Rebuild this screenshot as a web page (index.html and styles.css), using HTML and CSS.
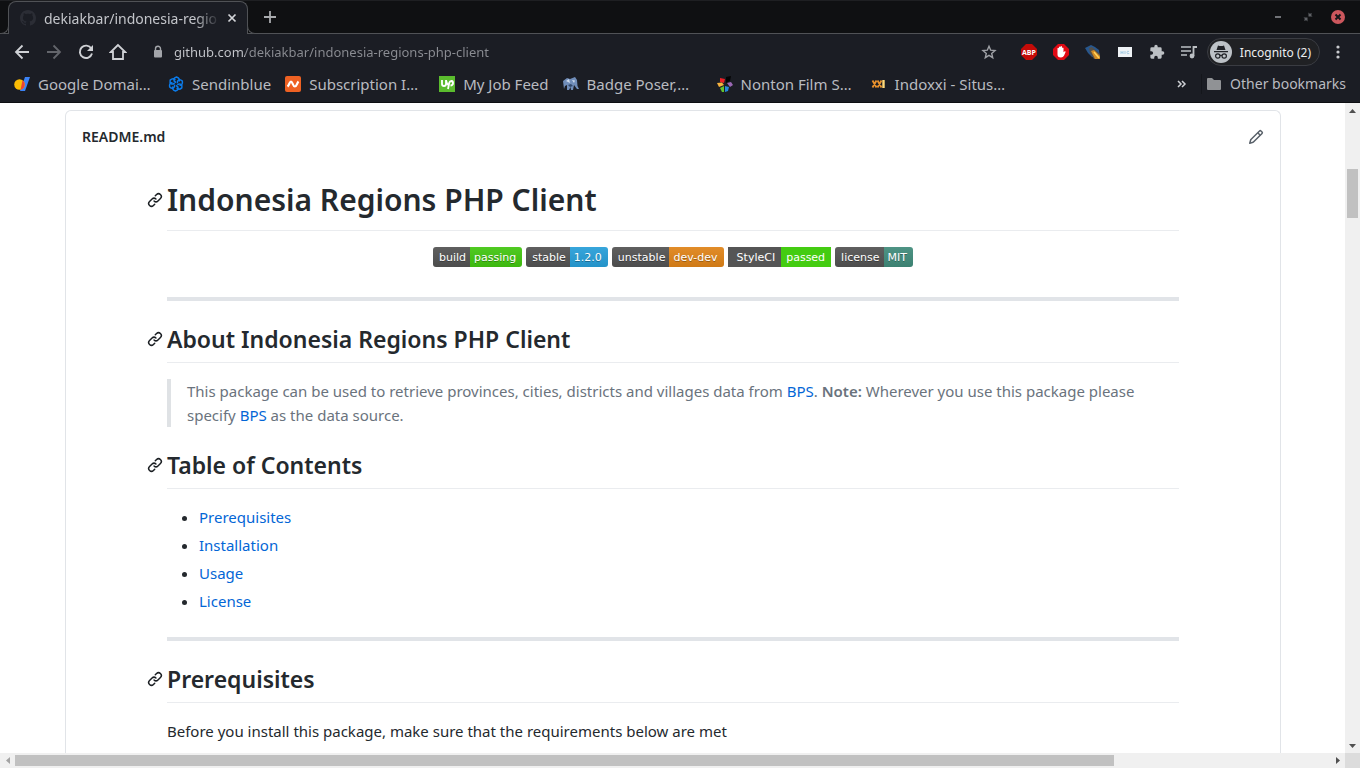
FILE: index.html
```html
<!DOCTYPE html>
<html lang="en">
<head>
<meta charset="utf-8">
<title>dekiakbar/indonesia-regions-php-client</title>
<link rel="stylesheet" href="styles.css">
</head>
<body>
<svg class="defs" aria-hidden="true">
  <symbol id="link" viewBox="0 0 16 16"><path fill-rule="evenodd" d="M7.775 3.275a.75.75 0 001.06 1.06l1.25-1.25a2 2 0 112.83 2.83l-2.5 2.5a2 2 0 01-2.83 0 .75.75 0 00-1.06 1.06 3.5 3.5 0 004.95 0l2.5-2.5a3.5 3.5 0 00-4.95-4.95l-1.25 1.25zm-4.69 9.64a2 2 0 010-2.83l2.5-2.5a2 2 0 012.83 0 .75.75 0 001.06-1.06 3.5 3.5 0 00-4.95 0l-2.5 2.5a3.5 3.5 0 004.95 4.95l1.25-1.25a.75.75 0 00-1.06-1.06l-1.25 1.25a2 2 0 01-2.83 0z"/></symbol>
</svg>
<header class="chrome">
  <div class="tabstrip">
    <div class="tab">
      <svg class="tab-icon" viewBox="0 0 16 16" aria-hidden="true"><path fill="#2b2d35" d="M8 0C3.58 0 0 3.58 0 8c0 3.54 2.29 6.53 5.47 7.59.4.07.55-.17.55-.38 0-.19-.01-.82-.01-1.49-2.01.37-2.53-.49-2.69-.94-.09-.23-.48-.94-.82-1.13-.28-.15-.68-.52-.01-.53.63-.01 1.08.58 1.23.82.72 1.21 1.87.87 2.33.66.07-.52.28-.87.51-1.07-1.78-.2-3.64-.89-3.64-3.95 0-.87.31-1.59.82-2.15-.08-.2-.36-1.02.08-2.12 0 0 .67-.21 2.2.82.64-.18 1.32-.27 2-.27s1.36.09 2 .27c1.53-1.04 2.2-.82 2.2-.82.44 1.1.16 1.92.08 2.12.51.56.82 1.27.82 2.15 0 3.07-1.87 3.75-3.65 3.95.29.25.54.73.54 1.48 0 1.07-.01 1.93-.01 2.2 0 .21.15.46.55.38A8.01 8.01 0 0016 8c0-4.42-3.58-8-8-8z"/></svg>
      <span class="tab-title">dekiakbar/indonesia-regio</span>
      <button class="tab-close" aria-label="Close tab"><svg width="10" height="10" viewBox="0 0 10 10"><path d="M1.500 1.500l7 7m0-7l-7 7" stroke="#d4d6da" stroke-width="1.700"/></svg></button>
    </div>
    <button class="new-tab" aria-label="New tab"><svg width="14" height="14" viewBox="0 0 14 14"><path d="M7 1v12M1 7h12" stroke="#a9abae" stroke-width="1.800"/></svg></button>
    <div class="window-buttons">
      <button aria-label="Minimize"><svg width="16" height="16" viewBox="0 0 16 16"><path d="M5 8h6" stroke="#707277" stroke-width="2"/></svg></button>
      <button aria-label="Restore"><svg width="16" height="16" viewBox="0 0 16 16"><path fill="#606267" d="M8.500 3.500v4h4zM7.500 12.500v-4h-4z"/><path d="M9.500 6.500l2-2M6.500 9.500l-2 2" stroke="#606267" stroke-width="1.300"/></svg></button>
      <button aria-label="Close window"><svg width="16" height="16" viewBox="0 0 16 16"><circle cx="8" cy="8" r="7" fill="#cc575d"/><path d="M5.500 5.500l5 5m0-5l-5 5" stroke="#15171a" stroke-width="2"/></svg></button>
    </div>
  </div>
  <div class="toolbar">
    <button class="tool" aria-label="Back"><svg width="16" height="16" viewBox="0 0 16 16"><path d="M15 8H2m6.500-6.500L2 8l6.500 6.500" fill="none" stroke="#cfd1d5" stroke-width="1.800"/></svg></button>
    <button class="tool" aria-label="Forward"><svg width="16" height="16" viewBox="0 0 16 16"><path d="M1 8h13M7.500 1.500L14 8l-6.500 6.500" fill="none" stroke="#63656b" stroke-width="1.800"/></svg></button>
    <button class="tool" aria-label="Reload"><svg width="16" height="16" viewBox="0 0 16 16"><path d="M13.300 4.500A6.200 6.200 0 1 0 14 9.500" fill="none" stroke="#cfd1d5" stroke-width="1.900"/><path d="M15 1v6H9z" fill="#cfd1d5"/></svg></button>
    <button class="tool" aria-label="Home"><svg width="18" height="18" viewBox="0 0 18 18"><path d="M9 2L1.800 9H4v7h10V9h2.200z" fill="none" stroke="#cfd1d5" stroke-width="1.800"/></svg></button>
    <div class="address">
      <svg width="16" height="16" viewBox="0 0 16 16" aria-hidden="true"><path d="M5.500 7V4.800a2.500 2.500 0 015 0V7" fill="none" stroke="#a3a5aa" stroke-width="1.400"/><rect x="4" y="6" width="8" height="7.500" rx="1" fill="#a3a5aa"/></svg>
      <input class="url" type="text" aria-label="Address" value="github.com/dekiakbar/indonesia-regions-php-client">
      <button class="tool" aria-label="Bookmark this page"><svg width="16" height="16" viewBox="0 0 16 16"><path d="M8 2.200l1.700 4 4.300.4-3.300 2.800 1 4.300L8 11.400l-3.700 2.300 1-4.300L2 6.600l4.300-.4z" fill="none" stroke="#9fa1a6" stroke-width="1.400"/></svg></button>
    </div>
    <button class="tool tool--first" aria-label="Adblock Plus"><svg width="16" height="16" viewBox="0 0 16 16"><path d="M5 0h6l5 5v6l-5 5H5l-5-5V5z" fill="#c40b08"/><text class="abp" x="8" y="11">ABP</text></svg></button>
    <button class="tool" aria-label="AdBlock"><svg width="16" height="16" viewBox="0 0 16 16"><path d="M5 0h6l5 5v6l-5 5H5l-5-5V5z" fill="#e10a14"/><path d="M4.500 8V4.300q.8-.9 1.500 0V3q.8-.9 1.500 0v-.500q.8-.9 1.500 0V4q.8-.9 1.500 0v4.300l1.200-1q1-.3.900.700L11 11.700Q10 13.500 8 13.500c-2.500 0-3.500-1.300-3.500-3z" fill="#fff"/></svg></button>
    <button class="tool" aria-label="Download helper"><svg width="16" height="16" viewBox="0 0 16 16"><path d="M0 4l6-3 4 2 4 3 1 8-8-1-4-4z" fill="#28578d"/><path d="M4 4l3-1 8 7v5h-6L5 9z" fill="#55504a"/><path d="M6 7l3-1 6 6v3h-5z" fill="#d28a25"/><path d="M9 8l5 6" stroke="#ffd35c" stroke-width="1.500"/></svg></button>
    <button class="tool" aria-label="Extension"><svg width="16" height="16" viewBox="0 0 16 16"><path d="M1 3h14v10H1z" fill="#eef2f5"/><path d="M4 7v3m0-1.500h2m0-1.500v3m2-3v3m4-2.500q-2-1-2 1t2 1V9" fill="none" stroke="#a5cbe2"/></svg></button>
    <button class="tool" aria-label="Extensions"><svg width="16" height="16" viewBox="0 0 24 24"><path fill="#bcc0c4" d="M20.500 11H19V7a2 2 0 00-2-2h-4V3.500a2.500 2.500 0 00-5 0V5H4a2 2 0 00-2 2v3.800h1.500a2.700 2.700 0 010 5.400H2V20a2 2 0 002 2h3.800v-1.500a2.700 2.700 0 015.400 0V22H17a2 2 0 002-2v-4h1.500a2.500 2.500 0 000-5z"/></svg></button>
    <button class="tool" aria-label="Media controls"><svg width="16" height="16" viewBox="0 0 16 16"><path d="M0 3h10M0 7h10M0 11h6" stroke="#bcc0c4" stroke-width="1.600"/><path d="M12.500 12V3H16" fill="none" stroke="#bcc0c4" stroke-width="1.800"/><circle cx="11" cy="12" r="2.400" fill="#bcc0c4"/></svg></button>
    <button class="incognito"><svg width="22" height="22" viewBox="0 0 22 22" aria-hidden="true"><circle cx="11" cy="11" r="11" fill="#bdc2c7"/><path d="M6.500 9L8 4.500q3 1 6 0L15.500 9zM4 10h14v1.300H4z" fill="#202227"/><g fill="none" stroke="#202227" stroke-width="1.200"><circle cx="7.800" cy="15" r="2.200"/><circle cx="14.200" cy="15" r="2.200"/><path d="M10 14.600q1-.6 2 0"/></g></svg>Incognito (2)</button>
    <button class="menu" aria-label="Menu"><svg width="4" height="16" viewBox="0 0 4 16"><g fill="#c8cace"><circle cx="2" cy="3" r="1.600"/><circle cx="2" cy="8" r="1.600"/><circle cx="2" cy="13" r="1.600"/></g></svg></button>
  </div>
  <nav class="bookmarks" aria-label="Bookmarks">
    <a class="bookmark bookmark--clipped" href="#"><svg width="16" height="16" viewBox="0 0 16 16"><path d="M11 1h5l-5 14H6z" fill="#3b83f6"/><circle cx="5.500" cy="8.500" r="5.300" fill="#fbbc04"/><path d="M8.500 4.200a5.300 5.300 0 01-.6 9L6.500 14z" fill="#ea4335"/></svg>Google Domai…</a>
    <a class="bookmark" href="#"><svg width="16" height="16" viewBox="0 0 16 16"><g fill="none" stroke="#0b7bea" stroke-width="1.500"><path id="petal" d="M8 6.500C5 5 5 2 8.500 1c3 1 3.500 3 2.300 4.500"/><use href="#petal" transform="rotate(60 8 8)"/><use href="#petal" transform="rotate(120 8 8)"/><use href="#petal" transform="rotate(180 8 8)"/><use href="#petal" transform="rotate(240 8 8)"/><use href="#petal" transform="rotate(300 8 8)"/></g></svg>Sendinblue</a>
    <a class="bookmark bookmark--clipped" href="#"><svg width="16" height="16" viewBox="0 0 16 16"><rect width="16" height="16" rx="2" fill="#ee6123"/><path d="M2.500 10.500C4.500 9 4.500 5.500 6 5.500S8 10.500 9.800 10.500 12 7 13.500 5.500" fill="none" stroke="#fff" stroke-width="2.200"/></svg>Subscription I…</a>
    <a class="bookmark" href="#"><svg width="16" height="16" viewBox="0 0 16 16"><path d="M0 0h16v16H0z" fill="#5bbc2e"/><path d="M3 4v4q0 2 2 2t2-2V4m0 0q.5 4 3 5.500M9 13l1.200-6q.5-2 2.300-2 1.700.3 1.500 2.300T11.500 9.500" fill="none" stroke="#fff" stroke-width="1.800"/></svg>My Job Feed</a>
    <a class="bookmark bookmark--clipped" href="#"><svg width="16" height="16" viewBox="0 0 16 16"><path d="M0 5l4-3 3 1 5-2 2 3 .5 6 1.500 3h-2l-3-4-1 5H8l-.5-3L6 14H4V9l-2 1-1 3z" fill="#708db9"/><path d="M3 5l3-2 1 4zm6-1l3 .5L11 7z" fill="#cfdcee"/><path d="M5 9l3-1 2 2-3 1z" fill="#31486c"/></svg>Badge Poser,…</a>
    <a class="bookmark bookmark--clipped" href="#"><svg width="16" height="16" viewBox="0 0 16 16"><path d="M9 1l5-1-1 5-4 2z" fill="#050506"/><path d="M3 2l5 1-1 4-4-1z" fill="#ea1f26"/><path d="M0 7l5-.5L7 9l-5 2z" fill="#f6b23e"/><path d="M3 12l4-2v6H5z" fill="#63c22c"/><path d="M8 10l4 1-1 4-3 1z" fill="#2589db"/><path d="M10 7l4-1 2 3-3 2z" fill="#9b68b5"/></svg>Nonton Film S…</a>
    <a class="bookmark bookmark--clipped" href="#"><svg width="16" height="16" viewBox="0 0 16 16"><path d="M1.500 4.500l4 7m0-7l-4 7M6.500 4.500l4 7m0-7l-4 7" stroke="#e8912d" stroke-width="1.800"/><path d="M12.500 4v8" stroke="#ffd978" stroke-width="2.400"/></svg>Indoxxi - Situs…</a>
    <button class="overflow" aria-label="More bookmarks"><svg width="10" height="8" viewBox="0 0 10 8"><path d="M1 1l3 3-3 3m4-6l3 3-3 3" fill="none" stroke="#cfd1d5" stroke-width="1.500"/></svg></button>
    <a class="bookmark bookmark--other" href="#"><svg width="16" height="16" viewBox="0 0 16 16"><path d="M1 3q0-1 1-1h4l2 2h6q1 0 1 1v8q0 1-1 1H2q-1 0-1-1z" fill="#909295"/></svg>Other bookmarks</a>
  </nav>
</header>
<div class="window">
  <main class="page">
    <section class="card">
      <div class="card-head"><a href="#">README.md</a><button aria-label="Edit this file"><svg width="16" height="16" viewBox="0 0 16 16"><path fill="#586069" fill-rule="evenodd" d="M11.013 1.427a1.75 1.75 0 012.474 0l1.086 1.086a1.75 1.75 0 010 2.474l-8.61 8.61c-.21.21-.47.364-.756.445l-3.251.93a.75.75 0 01-.927-.928l.929-3.25a1.75 1.75 0 01.445-.758l8.61-8.61zm1.414 1.06a.25.25 0 00-.354 0L10.811 3.75l1.439 1.44 1.263-1.263a.25.25 0 000-.354l-1.086-1.086zM11.189 6.25L9.75 4.81l-6.286 6.287a.25.25 0 00-.064.108l-.558 1.953 1.953-.558a.249.249 0 00.108-.064l6.286-6.286z"/></svg></button></div>
      <article class="readme">
        <h1><a class="anchor" href="#" aria-label="Permalink"><svg width="16" height="16"><use href="#link"/></svg></a>Indonesia Regions PHP Client</h1>
        <p class="badges">
          <a class="badge" href="#"><span class="key">build</span><span class="value green">passing</span></a>
          <a class="badge" href="#"><span class="key">stable</span><span class="value blue">1.2.0</span></a>
          <a class="badge" href="#"><span class="key">unstable</span><span class="value orange">dev-dev</span></a>
          <a class="badge badge--flat" href="#"><span class="key">StyleCI</span><span class="value green">passed</span></a>
          <a class="badge" href="#"><span class="key">license</span><span class="value teal">MIT</span></a>
        </p>
        <hr>
        <h2><a class="anchor" href="#" aria-label="Permalink"><svg width="16" height="16"><use href="#link"/></svg></a>About Indonesia Regions PHP Client</h2>
        <blockquote>This package can be used to retrieve provinces, cities, districts and villages data from <a href="#">BPS</a>. <strong>Note:</strong> Wherever you use this package please specify <a href="#">BPS</a> as the data source.</blockquote>
        <h2><a class="anchor" href="#" aria-label="Permalink"><svg width="16" height="16"><use href="#link"/></svg></a>Table of Contents</h2>
        <ul>
          <li><a href="#">Prerequisites</a></li>
          <li><a href="#">Installation</a></li>
          <li><a href="#">Usage</a></li>
          <li><a href="#">License</a></li>
        </ul>
        <hr>
        <h2><a class="anchor" href="#" aria-label="Permalink"><svg width="16" height="16"><use href="#link"/></svg></a>Prerequisites</h2>
        <p>Before you install this package, make sure that the requirements below are met</p>
      </article>
    </section>
  </main>
  <div class="scroll scroll--y">
    <button aria-label="Scroll up"><svg width="7" height="4" viewBox="0 0 7 4"><path d="M0 4L3.500 0 7 4z" fill="#505050"/></svg></button>
    <div class="track"><div class="thumb"></div></div>
    <button aria-label="Scroll down"><svg width="7" height="4" viewBox="0 0 7 4"><path d="M0 0h7L3.500 4z" fill="#505050"/></svg></button>
  </div>
  <div class="scroll scroll--x">
    <button aria-label="Scroll left"><svg width="4" height="7" viewBox="0 0 4 7"><path d="M4 0v7L0 3.500z" fill="#a3a3a3"/></svg></button>
    <div class="track"><div class="thumb"></div></div>
    <button aria-label="Scroll right"><svg width="4" height="7" viewBox="0 0 4 7"><path d="M0 0v7l4-3.500z" fill="#505050"/></svg></button>
  </div>
  <div class="corner"></div>
</div>
</body>
</html>
```
FILE: styles.css
```css
* { box-sizing: border-box; }
body {
  margin: 0;
  height: 100vh;
  display: flex;
  flex-direction: column;
  overflow: hidden;
  font-family: "Noto Sans", "Open Sans", sans-serif;
  background: #fff;
}
button {
  display: flex;
  align-items: center;
  justify-content: center;
  padding: 0;
  border: 0;
  background: none;
  font-family: inherit;
  color: inherit;
}
a { color: #0366d6; text-decoration: none; }
svg { flex: none; display: block; }
.defs { position: absolute; width: 0; height: 0; }

/* Browser frame */
.chrome { flex: none; background: #1b1d24; color: #b9bbc0; }
.tabstrip {
  display: flex;
  height: 34px;
  padding: 0 12px 0 8px;
  background: #0f1012;
  border-top: 1px solid #1e1f22;
  border-bottom: 1px solid #505256;
}
.tab {
  position: relative;
  display: flex;
  align-items: center;
  width: 240px;
  height: 33px;
  padding: 0 7px 0 11px;
  border: 1px solid #505256;
  border-bottom: 0;
  border-radius: 8px 8px 0 0;
  background: #1b1d24;
}
.tab::before, .tab::after {
  content: "";
  position: absolute;
  bottom: 0;
  width: 8px;
  height: 8px;
  background: #0f1012;
  border-bottom: 1px solid #505256;
}
.tab::before { right: 100%; border-right: 1px solid #505256; border-bottom-right-radius: 8px; }
.tab::after { left: 100%; border-left: 1px solid #505256; border-bottom-left-radius: 8px; }
.tab-icon { width: 16px; height: 16px; }
.tab-title {
  flex: 1;
  margin-left: 8px;
  overflow: hidden;
  white-space: nowrap;
  font-size: 14px;
  color: #c3c5ca;
  -webkit-mask-image: linear-gradient(90deg, #000 86%, transparent);
  mask-image: linear-gradient(90deg, #000 86%, transparent);
}
.tab-close { width: 16px; height: 16px; margin-left: 4px; }
.new-tab { width: 44px; }
.window-buttons { display: flex; gap: 14px; margin-left: auto; padding-right: 2px; }

.toolbar { display: flex; align-items: center; height: 36px; padding: 0 12px 0 6px; }
.tool { flex: none; width: 32px; height: 32px; }
.tool--first { margin-left: 8px; }
.abp { font: 700 7px "Open Sans", sans-serif; fill: #fff; text-anchor: middle; }
.address { flex: 1; display: flex; align-items: center; gap: 8px; padding-left: 16px; }
.url {
  flex: 1;
  min-width: 0;
  padding: 0;
  border: 0;
  outline: 0;
  font: 13px "Noto Sans", "Open Sans", sans-serif;
  color: #96989d;
  background: linear-gradient(90deg, #c6c8cd 71px, #8b8d93 71px);
  -webkit-background-clip: text;
  background-clip: text;
  -webkit-text-fill-color: transparent;
}
.incognito {
  gap: 8px;
  height: 28px;
  margin-left: 2px;
  padding: 0 8px 0 2px;
  border: 1px solid #3a3c42;
  border-radius: 14px;
  background: #202124;
  font-size: 12px;
  color: #eceef0;
  white-space: nowrap;
}
.menu { width: 20px; height: 28px; margin-left: 8px; }

.bookmarks {
  display: flex;
  align-items: center;
  gap: 14px;
  height: 33px;
  padding: 0 14px 4px;
  border-bottom: 1px solid #0d0e12;
}
.bookmark {
  flex: none;
  display: flex;
  align-items: center;
  gap: 8px;
  font-size: 15px;
  line-height: 20px;
  color: #b9bbc0;
  white-space: nowrap;
}
.bookmark--clipped { width: 140px; }
.overflow { margin-left: auto; height: 20px; }
.bookmark--other { padding-left: 4px; border-left: 1px solid #14161b; font-size: 14px; }

/* Page area and scroll bars */
.window {
  flex: 1;
  min-height: 0;
  display: grid;
  grid-template-columns: minmax(0, 1fr) 15px;
  grid-template-rows: minmax(0, 1fr) 15px;
}
.page { overflow: hidden; padding: 7px 64px 0 65px; }
.scroll { display: flex; background: #f0f0f0; }
.scroll button { flex: none; width: 15px; height: 15px; }
.scroll .track { flex: 1; display: flex; }
.scroll .thumb { background: #c1c1c1; }
.scroll--y { flex-direction: column; }
.scroll--y .track { flex-direction: column; padding: 1px 2px 0; }
.scroll--y .track::before { content: ""; height: 8%; }
.scroll--y .thumb { height: 8%; }
.scroll--x .track { padding: 2px 0; }
.scroll--x .thumb { width: calc(100% - 216px); }
.corner { background: #dcdcdc; }

/* README card */
.card {
  min-height: 100%;
  border: 1px solid #e1e4e8;
  border-bottom: 0;
  border-radius: 6px 6px 0 0;
}
.card-head {
  display: flex;
  align-items: center;
  justify-content: space-between;
  padding: 15px 16px 17px;
}
.card-head a { font-size: 14px; line-height: 21px; font-weight: 600; color: #24292e; }
.readme {
  max-width: 1012px;
  margin: 0 auto;
  padding-top: 16px;
  font-size: 15px;
  line-height: 24px;
  color: #24292e;
}
h1, h2 {
  position: relative;
  margin: 24px 0 16px;
  border-bottom: 1px solid #eaecef;
  font-weight: 600;
}
h1 { margin-top: 0; padding-bottom: 10px; font-size: 30px; line-height: 40px; }
h2 { padding-bottom: 9px; font-size: 23px; line-height: 28px; }
.anchor {
  position: absolute;
  right: 100%;
  top: 0;
  display: flex;
  align-items: center;
  height: 28px;
  padding-right: 4px;
  fill: #1b1f23;
}
h1 .anchor { height: 40px; }
p { margin: 0 0 16px; }
hr { height: 4px; margin: 24px 0; border: 0; background: #e1e4e8; }
ul { margin: 0; padding-left: 32px; }
li + li { margin-top: 4px; }
blockquote {
  margin: 0;
  padding: 0 16px;
  border-left: 4px solid #dfe2e5;
  color: #6a737d;
}
strong { font-weight: 600; }
.badges { display: flex; justify-content: center; gap: 4px; height: 26px; margin: 0; }
.badge {
  display: flex;
  height: 20px;
  border-radius: 3px;
  overflow: hidden;
  font: 11px/21px "DejaVu Sans", sans-serif;
  color: #fff;
  text-shadow: 0 1px rgba(1, 1, 1, .3);
}
.badge span { background-image: linear-gradient(rgba(187, 187, 187, .1), rgba(0, 0, 0, .1)); }
.badge .key { padding: 0 4px 0 6px; background-color: #555; }
.badge .value { padding: 0 6px 0 4px; }
.badge .green { background-color: #4c1; }
.badge .blue { background-color: #28a3df; }
.badge .orange { background-color: #e68718; }
.badge .teal { background-color: #428f7e; }
.badge--flat { border-radius: 0; text-shadow: none; }
.badge--flat .key { padding: 0 6px 0 9px; }
.badge--flat .value { padding: 0 6px 0 5px; }
.badge--flat span { background-image: none; }
```
